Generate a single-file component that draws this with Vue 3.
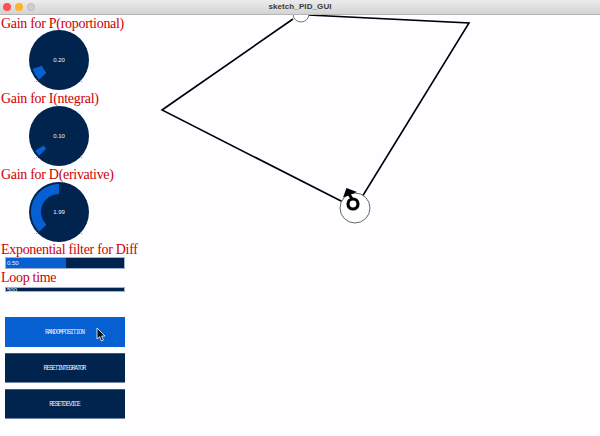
<script setup>
const polar = (cx, cy, r, deg) => {
  const a = (deg * Math.PI) / 180
  return `${(cx + r * Math.cos(a)).toFixed(2)} ${(cy + r * Math.sin(a)).toFixed(2)}`
}
const arc = (from, to, ro = 28, ri = 18) => {
  const large = to - from > 180 ? 1 : 0
  return `M${polar(30, 30, ro, from)}A${ro} ${ro} 0 ${large} 1 ${polar(30, 30, ro, to)}L${polar(30, 30, ri, to)}A${ri} ${ri} 0 ${large} 0 ${polar(30, 30, ri, from)}Z`
}
const gains = [
  { label: 'Gain for P(roportional)', value: '0.20', d: arc(135, 161) },
  { label: 'Gain for I(ntegral)', value: '0.10', d: arc(135, 148) },
  { label: 'Gain for D(erivative)', value: '1.99', d: arc(135, 270) },
]
const buttons = [
  { label: 'RANDOMPOSITION', active: true },
  { label: 'RESETINTEGRATOR', active: false },
  { label: 'RESETDEVICE', active: false },
]
</script>

<template>
  <div class="window">
    <header class="titlebar">
      <div class="lights">
        <span class="light red"></span>
        <span class="light yellow"></span>
        <span class="light grey"></span>
      </div>
      <span class="title">sketch_PID_GUI</span>
    </header>
    <div class="body">
      <aside class="panel">
        <section v-for="g in gains" :key="g.label" class="gain">
          <h2 class="label">{{ g.label }}</h2>
          <svg class="knob" width="60" height="60" viewBox="0 0 60 60">
            <circle cx="30" cy="30" r="30" fill="#01244f" />
            <path :d="g.d" fill="#0760d2" />
            <path d="M7 52l1.5-1.5M53 52l-1.500-1.500" stroke="#6f9fd0" stroke-width="1" />
            <text x="30" y="32" text-anchor="middle" class="knob-value">{{ g.value }}</text>
          </svg>
        </section>
        <h2 class="label filter-label">Exponential filter for Diff</h2>
        <div class="slider tall">
          <div class="fill half"></div>
          <span class="slider-value">0.50</span>
        </div>
        <h2 class="label loop-label">Loop time</h2>
        <div class="slider short">
          <span class="slider-value">500</span>
        </div>
        <div class="buttons">
          <button v-for="b in buttons" :key="b.label" class="btn" :class="{ active: b.active }">{{ b.label }}</button>
          <svg class="cursor" width="10" height="15" viewBox="0 0 10 15">
            <path d="M1 1v11l2.600-2.300 1.800 4.300 2-.9-1.800-4.100h3.400z" fill="#111" stroke="#fff" stroke-width=".8" />
          </svg>
        </div>
      </aside>
      <svg class="canvas" width="450" height="421" viewBox="150 15 450 421">
        <path d="M343 202L162 110L293 19M308 15L469 23L362 197" fill="none" stroke="#000" stroke-width="1.600" />
        <circle cx="301" cy="14" r="8" fill="#fff" stroke="#777" stroke-width="1" />
        <circle cx="355" cy="208" r="15" fill="#fff" stroke="#666" stroke-width="1" />
        <circle cx="353" cy="204" r="5" fill="none" stroke="#000" stroke-width="3.200" />
        <path d="M352 199L349 194" fill="none" stroke="#000" stroke-width="3" />
        <path d="M346.500 188L343 197.500L357 192z" fill="#000" />
      </svg>
    </div>
  </div>
</template>

<style scoped>
.window {
  width: 600px;
  height: 436px;
  overflow: hidden;
  background: #fefdff;
  display: flex;
  flex-direction: column;
}
.titlebar {
  height: 15px;
  flex: none;
  display: flex;
  align-items: center;
  justify-content: center;
  position: relative;
  box-sizing: border-box;
  background: linear-gradient(#ececec, #d3d3d3);
  border-bottom: 1px solid #b5b5b5;
}
.lights {
  position: absolute;
  left: 3px;
  top: 3px;
  display: flex;
  gap: 4px;
}
.light {
  width: 8px;
  height: 8px;
  border-radius: 50%;
}
.red { background: #fb5150; }
.yellow { background: #fcb22a; }
.grey { background: #cfcfcf; border: 1px solid #b9b9b9; box-sizing: border-box; }
.title {
  font: bold 8px/1 "Liberation Sans", Arial, sans-serif;
  color: #3a3a3a;
  letter-spacing: .1px;
}
.body {
  flex: 1;
  display: flex;
}
.panel {
  width: 150px;
  flex: none;
  display: flex;
  flex-direction: column;
  padding-top: 1px;
  box-sizing: border-box;
}
.gain {
  display: flex;
  flex-direction: column;
  margin-bottom: 1px;
}
.label {
  margin: 0 0 0 1px;
  height: 14px;
  font: 400 14px/16px "Liberation Serif", "Times New Roman", serif;
  letter-spacing: -.3px;
  color: #d00000;
  white-space: nowrap;
}
.knob {
  display: block;
  margin-left: 29px;
}
.gain + .gain .knob { margin-top: 1px; }
.gain:nth-child(3) { margin-bottom: 0; }
.knob-value {
  font: 6px "Liberation Sans", Arial, sans-serif;
  fill: #eef3f9;
}
.filter-label { margin-top: 0; }
.slider {
  width: 120px;
  margin-left: 5px;
  background: #01244f;
  position: relative;
  overflow: hidden;
  box-sizing: border-box;
  outline: 1px solid #9fb2cc;
  outline-offset: -1px;
}
.tall { height: 12px; margin-top: 1px; }
.short { height: 5px; margin-top: 3px; }
.fill { height: 100%; }
.half { width: 51%; background: #0760d2; }
.slider-value {
  position: absolute;
  left: 2px;
  top: 50%;
  transform: translateY(-50%);
  font: 6px/1 "Liberation Sans", Arial, sans-serif;
  color: #eef3f9;
}
.loop-label { margin-top: 1px; }
.buttons {
  position: relative;
  margin: 25px 0 0 5px;
  width: 120px;
  display: flex;
  flex-direction: column;
  gap: 6px;
}
.btn {
  height: 30px;
  padding: 2px 1px 0 0;
  border: 0;
  border-top: 1px solid #3d5a85;
  border-bottom: 1px solid #7187a8;
  background: #01244f;
  color: #e6edf6;
  font: 6.400px/1 "Liberation Mono", monospace;
  letter-spacing: -1.050px;
  text-align: center;
}
.btn.active {
  background: #0760d2;
  border-color: #0760d2;
}
.cursor {
  position: absolute;
  left: 91px;
  top: 10px;
}
.canvas {
  display: block;
  flex: none;
}
</style>
